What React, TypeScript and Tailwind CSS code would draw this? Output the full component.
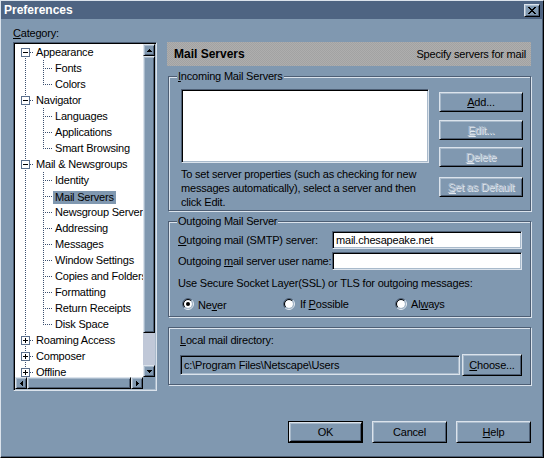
import type { ReactNode } from "react";

const FONT = "font-[family-name:'Liberation_Sans',Arial,sans-serif]";
const RAISED =
    "border border-t-[#dbe3ec] border-l-[#dbe3ec] border-r-black border-b-black shadow-[inset_1px_1px_0_#a9bacb,inset_-1px_-1px_0_#4d5e74]";
const SUNKEN =
    "border border-t-[#4d5e74] border-l-[#4d5e74] border-r-[#dbe3ec] border-b-[#dbe3ec] shadow-[inset_1px_1px_0_#000,inset_-1px_-1px_0_#a9bacb]";
const ETCHED = "border border-[#4d5e74] shadow-[inset_1px_1px_0_#dbe3ec,1px_1px_0_#dbe3ec]";

interface TreeNode {
    label: string;
    open?: boolean;
    children?: string[];
}

const TREE: TreeNode[] = [
    { label: "Appearance", open: true, children: ["Fonts", "Colors"] },
    { label: "Navigator", open: true, children: ["Languages", "Applications", "Smart Browsing"] },
    {
        label: "Mail & Newsgroups",
        open: true,
        children: [
            "Identity",
            "Mail Servers",
            "Newsgroup Servers",
            "Addressing",
            "Messages",
            "Window Settings",
            "Copies and Folders",
            "Formatting",
            "Return Receipts",
            "Disk Space",
        ],
    },
    { label: "Roaming Access" },
    { label: "Composer" },
    { label: "Offline" },
    { label: "Advanced" },
];

const DOT = "#3c5070";

// dotted tree connectors, one pixel on / one off
const vdots = (x: number, y0: number, y1: number) => {
    const out = [];
    for (let y = y0 % 2 === 0 ? y0 : y0 + 1; y < y1; y += 2) {
        out.push(<rect key={`v${x}-${y}`} x={x} y={y} width={1} height={1} fill={DOT} />);
    }
    return out;
};

const hdots = (y: number, x0: number, x1: number) => {
    const out = [];
    for (let x = x0; x < x1; x += 2) {
        out.push(<rect key={`h${y}-${x}`} x={x} y={y} width={1} height={1} fill={DOT} />);
    }
    return out;
};

const TopRow = ({ node, first, last }: { node: TreeNode; first: boolean; last: boolean }) => (
    <div className="flex h-[16px] items-center whitespace-nowrap">
        <svg width="19" height="16" className="shrink-0" shapeRendering="crispEdges">
            {!first && vdots(10, 0, 4)}
            {!last && vdots(10, 14, 16)}
            {hdots(8, 15, 19)}
            <rect x="6.5" y="4.5" width="8" height="8" fill="#fff" stroke="#5a6f8c" />
            <rect x="8" y="8" width="5" height="1" fill="#000" />
            {!node.open && <rect x="10" y="6" width="1" height="5" fill="#000" />}
        </svg>
        <span className="px-[2px] pt-[1px] leading-[15px]">{node.label}</span>
    </div>
);

const ChildRow = ({ label, last, selected }: { label: string; last: boolean; selected: boolean }) => (
    <div className="flex h-[16px] items-center whitespace-nowrap">
        <svg width="38" height="16" className="shrink-0" shapeRendering="crispEdges">
            {vdots(10, 0, 16)}
            {vdots(28, 0, last ? 9 : 16)}
            {hdots(8, 30, 38)}
        </svg>
        <span
            className={
                selected
                    ? "px-[2px] mt-[2px] h-[13px] leading-[13px] bg-[#8098b0]"
                    : "px-[2px] pt-[1px] leading-[15px]"
            }
        >
            {label}
        </span>
    </div>
);

const Arrow = ({ dir }: { dir: "up" | "down" | "left" | "right" }) => {
    const rects: Record<string, number[][]> = {
        up: [[2, 0, 1, 1], [1, 1, 3, 1], [0, 2, 5, 1]],
        down: [[0, 0, 5, 1], [1, 1, 3, 1], [2, 2, 1, 1]],
        left: [[0, 2, 1, 1], [1, 1, 1, 3], [2, 0, 1, 5]],
        right: [[0, 0, 1, 5], [1, 1, 1, 3], [2, 2, 1, 1]],
    };
    const vertical = dir === "up" || dir === "down";
    return (
        <svg width={vertical ? 5 : 3} height={vertical ? 3 : 5} shapeRendering="crispEdges">
            {rects[dir].map(([x, y, w, h], i) => (
                <rect key={i} x={x} y={y} width={w} height={h} fill="#000" />
            ))}
        </svg>
    );
};

const ScrollBtn = ({ dir }: { dir: "up" | "down" | "left" | "right" }) => (
    <div className={`${RAISED} w-[12px] h-[12px] shrink-0 flex items-center justify-center bg-[#8098b0]`}>
        <Arrow dir={dir} />
    </div>
);

const TreeBox = () => {
    const rows: ReactNode[] = [];
    TREE.forEach((node, i) => {
        rows.push(<TopRow key={node.label} node={node} first={i === 0} last={i === TREE.length - 1} />);
        if (node.open && node.children) {
            node.children.forEach((c, j) =>
                rows.push(
                    <ChildRow
                        key={c}
                        label={c}
                        last={j === node.children!.length - 1}
                        selected={c === "Mail Servers"}
                    />
                )
            );
        }
    });

    return (
        <div className={`${SUNKEN} mt-[1px] h-[349px] p-[1px] bg-white flex flex-col`}>
            <div className="flex flex-1 min-h-0">
                <div className="flex-1 min-w-0 overflow-hidden bg-white">{rows}</div>
                <div className="w-[12px] flex flex-col">
                    <ScrollBtn dir="up" />
                    <div className={`${RAISED} h-[277px] bg-[#8098b0]`} />
                    <div className="flex-1 bg-[#c0c8d8]" />
                    <ScrollBtn dir="down" />
                </div>
            </div>
            <div className="h-[12px] flex">
                <ScrollBtn dir="left" />
                <div className={`${RAISED} flex-1 bg-[#8098b0]`} />
                <ScrollBtn dir="right" />
                <div className="w-[12px] bg-[#8098b0]" />
            </div>
        </div>
    );
};

const Button = ({
    children,
    disabled,
    className = "",
}: {
    children: ReactNode;
    disabled?: boolean;
    className?: string;
}) => (
    <div
        className={`${RAISED} bg-[#8098b0] flex items-center justify-center leading-[16px] whitespace-nowrap ${
            disabled ? "text-[#b3c1d1] [text-shadow:1px_1px_0_#e2e8ef]" : "text-black"
        } ${className}`}
    >
        {children}
    </div>
);

const Radio = ({ checked }: { checked?: boolean }) => (
    <svg width="12" height="12" className="shrink-0">
        <path d="M2.111 9.889 A5.5 5.5 0 0 1 9.889 2.111" fill="none" stroke="#4d5e74" />
        <path d="M9.889 2.111 A5.5 5.5 0 0 1 2.111 9.889" fill="none" stroke="#e8eef4" />
        <circle cx="6" cy="6" r="4" fill="#fff" />
        <path d="M2.818 9.182 A4.5 4.5 0 0 1 9.182 2.818" fill="none" stroke="#000" />
        <path d="M9.182 2.818 A4.5 4.5 0 0 1 2.818 9.182" fill="none" stroke="#a9bacb" />
        {checked && <circle cx="6" cy="6" r="2" fill="#000" />}
    </svg>
);

const CloseGlyph = () => {
    const rows = ["11000011", "01100110", "00111100", "00011000", "00111100", "01100110", "11000011"];
    return (
        <svg width="8" height="7" shapeRendering="crispEdges">
            {rows.map((r, y) =>
                r.split("").map((c, x) =>
                    c === "1" ? <rect key={`${x}-${y}`} x={x} y={y} width={1} height={1} fill="#000" /> : null
                )
            )}
        </svg>
    );
};

const Legend = ({ children }: { children: ReactNode }) => (
    <span className="absolute left-[8px] top-[-9px] px-[1px] bg-[#8098b0] leading-[16px]">{children}</span>
);

export default function App() {
    return (
        <div
            className={`${FONT} w-[544px] h-[458px] bg-[#8098b0] text-[11px] tracking-[-0.2px] leading-[16px] text-black border border-t-[#dbe3ec] border-l-[#dbe3ec] border-r-black border-b-black shadow-[inset_-1px_-1px_0_#4d5e74] flex flex-col overflow-hidden select-none`}
        >
            {/* Title bar */}
            <div className="h-[18px] shrink-0 bg-[#4e6482] flex items-center justify-between px-[3px]">
                <span className="text-white font-bold text-[12px] tracking-normal leading-[18px]">Preferences</span>
                <div className={`${RAISED} w-[16px] h-[13px] flex items-center justify-center bg-[#8098b0]`}>
                    <CloseGlyph />
                </div>
            </div>

            <div className="flex pl-[12px] pr-[11px] gap-[10px]">
                {/* Category tree */}
                <div className="w-[144px] shrink-0 pt-[6px]">
                    <div className="h-[16px] pt-[1px] leading-[15px]">
                        <u>C</u>ategory:
                    </div>
                    <TreeBox />
                </div>

                {/* Right panel */}
                <div className="w-[364px] mt-[23px]">
                    <div className="h-[24px] bg-[repeating-conic-gradient(#a2a2a2_0_25%,#aeaeae_0_50%)] bg-[length:2px_2px] flex items-center justify-between pl-[7px] pr-[5px]">
                        <span className="font-bold text-[12px] tracking-normal">Mail Servers</span>
                        <span>Specify servers for mail</span>
                    </div>

                    <div className={`${ETCHED} relative mt-[10px] ml-[1px] w-[363px] h-[135px] pt-[12px] pl-[12px] pr-[7px] flex justify-between`}>
                        <Legend>
                            <u>I</u>ncoming Mail Servers
                        </Legend>
                        <div className="w-[248px]">
                            <div className={`${SUNKEN} h-[74px] bg-white`} />
                            <p className="mt-[4px] leading-[14px] whitespace-nowrap">
                                To set server properties (such as checking for new
                                <br />
                                messages automatically), select a server and then
                                <br />
                                click Edit.
                            </p>
                        </div>
                        <div className="w-[84px] pt-[3px] flex flex-col">
                            <Button className="h-[20px]">
                                <u>A</u>dd...
                            </Button>
                            <Button className="h-[20px] mt-[8px]" disabled>
                                <u>E</u>dit...
                            </Button>
                            <Button className="h-[20px] mt-[7px]" disabled>
                                <u>D</u>elete
                            </Button>
                            <Button className="h-[20px] mt-[10px]" disabled>
                                <u>S</u>et as Default
                            </Button>
                        </div>
                    </div>

                    <div className={`${ETCHED} relative mt-[10px] ml-[1px] w-[363px] h-[96px] pt-[9px] pl-[9px] pr-[7px]`}>
                        <Legend>Outgoing Mail Server</Legend>
                        <div className="flex items-center h-[18px]">
                            <span className="w-[154px] whitespace-nowrap">
                                <u>O</u>utgoing mail (SMTP) server:
                            </span>
                            <div className={`${SUNKEN} w-[190px] h-[18px] bg-white pl-[3px] flex items-center`}>
                                mail.chesapeake.net
                            </div>
                        </div>
                        <div className="flex items-center h-[18px] mt-[3px]">
                            <span className="w-[154px] whitespace-nowrap">
                                Outgoing <u>m</u>ail server user name:
                            </span>
                            <div className={`${SUNKEN} w-[190px] h-[18px] bg-white`} />
                        </div>
                        <div className="mt-[5px] h-[16px] pt-[1px] leading-[15px] whitespace-nowrap">
                            Use Secure Socket Layer(SSL) or TLS for outgoing messages:
                        </div>
                        <div className="mt-[5px] h-[16px] pl-[4px] flex items-center">
                            <div className="w-[101px] flex items-center gap-[4px]">
                                <Radio checked />
                                <span className="pt-[2px]">
                                    Ne<u>v</u>er
                                </span>
                            </div>
                            <div className="w-[112px] flex items-center gap-[5px]">
                                <Radio />
                                <span>
                                    If <u>P</u>ossible
                                </span>
                            </div>
                            <div className="flex items-center gap-[4px]">
                                <Radio />
                                <span>
                                    Al<u>w</u>ays
                                </span>
                            </div>
                        </div>
                    </div>

                    <div className={`${ETCHED} mt-[10px] ml-[1px] w-[363px] h-[58px] pt-[4px] pl-[11px]`}>
                        <div className="h-[16px] pt-[1px] leading-[15px]">
                            <u>L</u>ocal mail directory:
                        </div>
                        <div className="mt-[6px] h-[22px] flex items-center">
                            <div className={`${SUNKEN} w-[280px] h-[20px] pl-[3px] flex items-center whitespace-nowrap`}>
                                c:\Program Files\Netscape\Users
                            </div>
                            <Button className="ml-[2px] w-[60px] h-[22px]">
                                <u>C</u>hoose...
                            </Button>
                        </div>
                    </div>
                </div>
            </div>

            {/* Dialog buttons */}
            <div className="mt-[30px] flex justify-end gap-[9px] pr-[12px]">
                <div className="border border-black w-[75px] h-[22px]">
                    <Button className="w-full h-full">OK</Button>
                </div>
                <Button className="w-[75px] h-[22px]">Cancel</Button>
                <Button className="w-[75px] h-[22px]">
                    <u>H</u>elp
                </Button>
            </div>
        </div>
    );
}
